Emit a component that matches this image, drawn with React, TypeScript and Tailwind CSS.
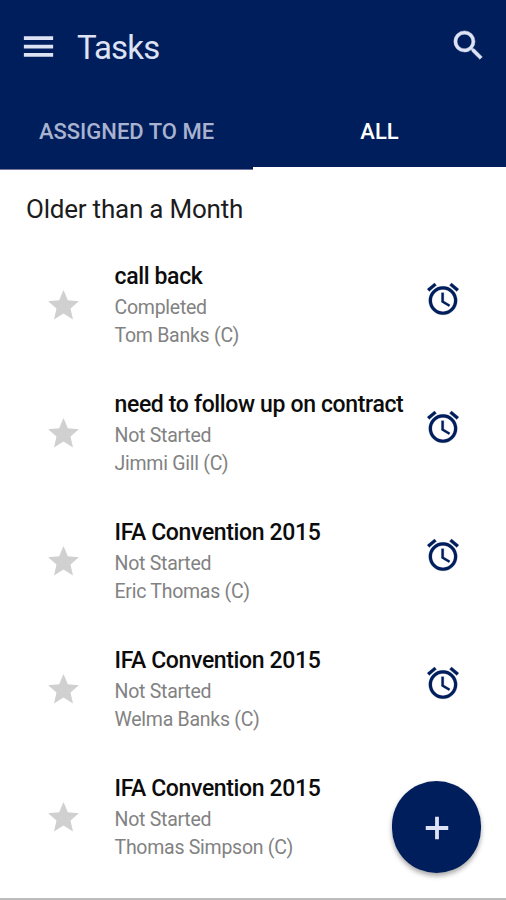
import React from "react";

const tasks = [
  { title: "call back", status: "Completed", person: "Tom Banks (C)" },
  { title: "need to follow up on contract", status: "Not Started", person: "Jimmi Gill (C)" },
  { title: "IFA Convention 2015", status: "Not Started", person: "Eric Thomas (C)" },
  { title: "IFA Convention 2015", status: "Not Started", person: "Welma Banks (C)" },
  { title: "IFA Convention 2015", status: "Not Started", person: "Thomas Simpson (C)" },
];

function Icon({ d, className }: { d: string; className: string }) {
  return (
    <svg viewBox="0 0 24 24" fill="currentColor" className={className}>
      <path d={d} />
    </svg>
  );
}

const MENU = "M3 18.3h18V16H3v2.3zm0-5.1h18v-2.3H3v2.3zm0-7.5V8h18V5.7H3z";
const SEARCH =
  "M15.5 14h-.79l-.28-.27A6.471 6.471 0 0 0 16 9.5 6.5 6.5 0 1 0 9.5 16c1.61 0 3.09-.59 4.23-1.57l.27.28v.79l5 4.99L20.49 19l-4.99-5zm-6 0C7.01 14 5 11.99 5 9.5S7.01 5 9.5 5 14 7.01 14 9.5 11.99 14 9.5 14z";
const STAR = "M12 17.27 18.18 21l-1.64-7.03L22 9.24l-7.19-.61L12 2 9.19 8.63 2 9.24l5.46 4.73L5.82 21z";
const ALARM =
  "M22 5.72l-4.6-3.86-1.29 1.53 4.6 3.86L22 5.72zM7.88 3.39L6.6 1.86 2 5.71l1.29 1.53 4.59-3.85zM12.5 8H11v6l4.75 2.85.75-1.23-4-2.37V8zM12 4c-4.97 0-9 4.03-9 9s4.02 9 9 9c4.97 0 9-4.03 9-9s-4.03-9-9-9zm0 16c-3.87 0-7-3.13-7-7s3.13-7 7-7 7 3.13 7 7-3.13 7-7 7z";
const PLUS = "M19.1 13.2h-5.9v5.9h-2.4v-5.9H4.9v-2.4h5.9V4.9h2.4v5.9h5.9v2.4z";

export default function App() {
  return (
    <div className="relative flex h-[900px] w-[506px] flex-col overflow-hidden bg-white font-[Roboto,sans-serif]">
      <header className="flex h-[170px] shrink-0 flex-col bg-[#001e5b]">
        <div className="flex h-[95px] items-center pr-[18px] pl-[19px]">
          <Icon d={MENU} className="mb-[3px] size-[39px] text-[#dde3f5]" />
          <h1 className="ml-[19px] grow text-[33px] leading-none tracking-[-0.85px] text-[#dde3f5]">Tasks</h1>
          <Icon d={SEARCH} className="mb-[5px] size-[39px] stroke-current stroke-[0.3] text-[#dde3f5]" />
        </div>
        <nav className="grid h-[75px] grid-cols-2 text-[22px] font-medium">
          <div className="flex items-center justify-center border-b border-[#77739c] pb-px text-[#a9b3d0]">
            ASSIGNED TO ME
          </div>
          <div className="flex items-center justify-center border-b-[3px] border-white text-white">ALL</div>
        </nav>
      </header>
      <h2 className="h-[84px] shrink-0 pt-[22px] pl-[26px] text-[26px] leading-[34px] tracking-[-0.22px] text-[#1c1c1c]">
        Older than a Month
      </h2>
      <main className="flex flex-col">
        {tasks.map((t, i) => (
          <div key={i} className="flex h-[128.1px] shrink-0 pl-[45px]">
            <Icon d={STAR} className="mt-[33px] size-[37px] text-[#d0d0d0]" />
            <div className="ml-[32.5px] w-[309.5px] whitespace-nowrap pt-[9px] text-[19.5px] leading-[28px] tracking-[-0.26px] text-[#828282]">
              <div className="h-[31px] text-[23px] font-medium tracking-[-0.36px] text-[#0c0c0c]">{t.title}</div>
              <div>{t.status}</div>
              <div>{t.person}</div>
            </div>
            {i < 4 && <Icon d={ALARM} className="mt-[26px] size-[38px] stroke-current stroke-[0.15] text-[#001e5b]" />}
          </div>
        ))}
      </main>
      <button className="absolute top-[781px] left-[392px] flex h-[92px] w-[89px] items-center justify-center rounded-full bg-[#001e5b] text-[#dde3f5] shadow-[0_3px_5px_rgba(0,0,0,0.35)]">
        <Icon d={PLUS} className="mt-px size-[38px]" />
      </button>
      <div className="absolute bottom-0 left-0 h-[2px] w-full bg-[#bcbcbc]" />
    </div>
  );
}
